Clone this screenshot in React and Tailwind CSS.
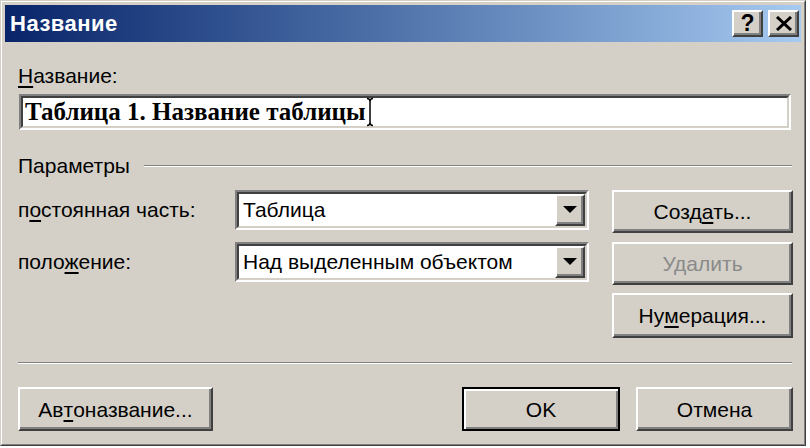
import React from 'react';

const raised =
  'border-2 border-t-white border-l-white border-r-[#404040] border-b-[#404040] bg-[#d4d0c8] shadow-[inset_-2px_-2px_0_#808080]';
const sunkenOuter = 'border-2 border-t-[#808080] border-l-[#808080] border-r-white border-b-white';
const sunkenInner = 'border-2 border-t-[#404040] border-l-[#404040] border-r-[#d4d0c8] border-b-[#d4d0c8] bg-white';

const U = ({ children }) => (
  <span className="underline decoration-2 underline-offset-[3px]">{children}</span>
);

const Button = ({ children, className = '', disabled = false }) => (
  <button
    className={`flex items-center justify-center text-[21px] leading-none ${raised} ${
      disabled ? 'text-[#8a8a8a]' : 'text-black'
    } ${className}`}
  >
    {children}
  </button>
);

const Combo = ({ value }) => (
  <div className={`flex h-[40px] w-[354px] shrink-0 ${sunkenOuter}`}>
    <div className={`flex flex-1 ${sunkenInner}`}>
      <div className="flex flex-1 items-center pl-[4px] text-[21px]">{value}</div>
      <div className={`flex w-[30px] items-center justify-center ${raised}`}>
        <svg width="14" height="8" viewBox="0 0 14 8">
          <path d="M0 0H14L7 7Z" fill="#000" />
        </svg>
      </div>
    </div>
  </div>
);

const App = () => {
  return (
    <div className="h-[448px] w-[810px] bg-white font-['Liberation_Sans',Arial,sans-serif] text-black">
      <div className="h-[446px] w-[806px] border border-t-[#d4d0c8] border-l-[#d4d0c8] border-r-[#404040] border-b-[#404040]">
        <div className="flex h-full flex-col border border-t-white border-l-white border-r-[#808080] border-b-[#808080] bg-[#d4d0c8] p-[3px]">
          {/* title bar */}
          <div className="flex h-[37px] items-center justify-between bg-gradient-to-r from-[#0a246a] to-[#a6caf0] pl-[5px] pr-[2px]">
            <span className="text-[22px] font-bold tracking-[0.5px] text-white">Название</span>
            <div className="flex gap-[5px]">
              <div className={`flex h-[27px] w-[31px] items-center justify-center text-[23px] font-bold leading-none ${raised}`}>
                ?
              </div>
              <div className={`flex h-[27px] w-[31px] items-center justify-center ${raised}`}>
                <svg width="18" height="15" viewBox="0 0 18 15">
                  <path d="M2 1L16 14M16 1L2 14" stroke="#000" strokeWidth="3" />
                </svg>
              </div>
            </div>
          </div>

          {/* content */}
          <div className="flex flex-col pl-[13px] pr-[8px]">
            <div className="mt-[22px] h-[24px] text-[21px] leading-[24px]">
              <U>Н</U>азвание:
            </div>

            <div className={`ml-[1px] mr-[2px] mt-[6px] flex h-[36px] ${sunkenOuter}`}>
              <div className={`flex flex-1 items-center pl-[2px] ${sunkenInner}`}>
                <span className="font-['Liberation_Serif','Times_New_Roman',serif] text-[25px] font-bold">
                  Таблица 1. Название таблицы
                </span>
                <svg width="8" height="30" viewBox="0 0 8 30" className="ml-[1px]">
                  <path
                    d="M1 1.5Q4 1.5 4 4.5Q4 1.5 7 1.5M4 4.5V25.5M1 28.5Q4 28.5 4 25.5Q4 28.5 7 28.5"
                    stroke="#000"
                    strokeWidth="1.5"
                    fill="none"
                  />
                </svg>
              </div>
            </div>

            <div className="mt-[24px] flex h-[24px] items-center text-[21px] leading-[24px]">
              <span>Параметры</span>
              <div className="ml-[14px] mr-[1px] h-[2px] flex-1 border-t border-b border-t-[#808080] border-b-white" />
            </div>

            <div className="mt-[12px] flex">
              <div className="flex w-[571px] shrink-0 flex-col">
                <div className="flex h-[40px] items-center">
                  <span className="w-[217px] shrink-0 text-[21px]">
                    п<U>о</U>стоянная часть:
                  </span>
                  <Combo value="Таблица" />
                </div>
                <div className="mt-[12px] flex h-[40px] items-center">
                  <span className="w-[217px] shrink-0 text-[21px]">
                    поло<U>ж</U>ение:
                  </span>
                  <Combo value="Над выделенным объектом" />
                </div>
              </div>
              <div className="ml-[23px] flex w-[181px] flex-col">
                <Button className="h-[43px]">
                  Созд<U>а</U>ть...
                </Button>
                <Button className="mt-[9px] h-[43px]" disabled>
                  Удалить
                </Button>
                <Button className="mt-[8px] h-[45px]">
                  Ну<U>м</U>ерация...
                </Button>
              </div>
            </div>

            <div className="mr-[1px] mt-[24px] h-[2px] border-t border-b border-t-[#808080] border-b-white" />

            <div className="mt-[23px] flex h-[44px] justify-between">
              <Button className="w-[195px]">
                Ав<U>т</U>оназвание...
              </Button>
              <div className="flex gap-[16px]">
                <button className="flex w-[158px] items-center justify-center border-2 border-black bg-[#d4d0c8] text-[21px] leading-none shadow-[inset_2px_2px_0_#ffffff,inset_-2px_-2px_0_#808080]">
                  OK
                </button>
                <Button className="w-[157px]">Отмена</Button>
              </div>
            </div>
          </div>
        </div>
      </div>
    </div>
  );
};

export default App;
